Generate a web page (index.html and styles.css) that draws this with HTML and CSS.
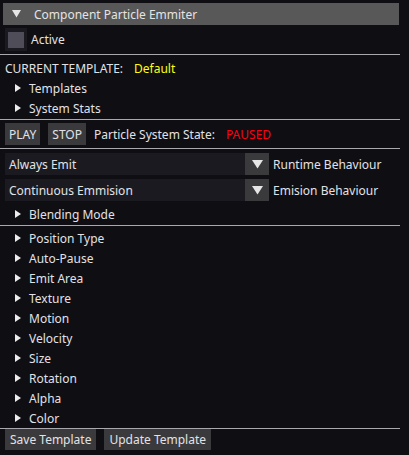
FILE: index.html
```html
<!DOCTYPE html>
<html>
<head>
<meta charset="utf-8">
<link rel="stylesheet" href="styles.css">
</head>
<body>
<div class="panel">
  <div class="header">
    <svg class="tri-down" width="9" height="8" viewBox="0 0 9 8"><polygon points="0,0 9,0 4.5,7.5" fill="#e6e6e6"/></svg>
    <span>Component Particle Emmiter</span>
  </div>
  <div class="row check-row">
    <div class="check"><div class="check-inner"></div></div>
    <span class="label">Active</span>
  </div>
  <div class="sep sep-a"></div>
  <div class="row text-row first">
    <span>CURRENT TEMPLATE:</span><span class="yellow">Default</span>
  </div>
  <div class="tree">
    <div class="node"><svg class="tri" width="6" height="8" viewBox="0 0 6 8"><polygon points="0,0 6,4 0,8" fill="#ececec"/></svg><span>Templates</span></div>
    <div class="node"><svg class="tri" width="6" height="8" viewBox="0 0 6 8"><polygon points="0,0 6,4 0,8" fill="#ececec"/></svg><span>System Stats</span></div>
  </div>
  <div class="sep sep-b"></div>
  <div class="row btn-row">
    <button class="btn play">PLAY</button>
    <button class="btn stop">STOP</button>
    <span class="state">Particle System State:</span>
    <span class="red">PAUSED</span>
  </div>
  <div class="sep sep-c"></div>
  <div class="combo-row">
    <div class="combo"><span>Always Emit</span></div>
    <div class="arrow"><svg width="11" height="9" viewBox="0 0 11 9"><polygon points="0,0 11,0 5.5,8.5" fill="#e6e6e6"/></svg></div>
    <span class="combo-label">Runtime Behaviour</span>
  </div>
  <div class="combo-row second">
    <div class="combo"><span>Continuous Emmision</span></div>
    <div class="arrow"><svg width="11" height="9" viewBox="0 0 11 9"><polygon points="0,0 11,0 5.5,8.5" fill="#e6e6e6"/></svg></div>
    <span class="combo-label">Emision Behaviour</span>
  </div>
  <div class="tree single">
    <div class="node"><svg class="tri" width="6" height="8" viewBox="0 0 6 8"><polygon points="0,0 6,4 0,8" fill="#ececec"/></svg><span>Blending Mode</span></div>
  </div>
  <div class="sep sep-d"></div>
  <div class="tree list">
    <div class="node"><svg class="tri" width="6" height="8" viewBox="0 0 6 8"><polygon points="0,0 6,4 0,8" fill="#ececec"/></svg><span>Position Type</span></div>
    <div class="node"><svg class="tri" width="6" height="8" viewBox="0 0 6 8"><polygon points="0,0 6,4 0,8" fill="#ececec"/></svg><span>Auto-Pause</span></div>
    <div class="node"><svg class="tri" width="6" height="8" viewBox="0 0 6 8"><polygon points="0,0 6,4 0,8" fill="#ececec"/></svg><span>Emit Area</span></div>
    <div class="node"><svg class="tri" width="6" height="8" viewBox="0 0 6 8"><polygon points="0,0 6,4 0,8" fill="#ececec"/></svg><span>Texture</span></div>
    <div class="node"><svg class="tri" width="6" height="8" viewBox="0 0 6 8"><polygon points="0,0 6,4 0,8" fill="#ececec"/></svg><span>Motion</span></div>
    <div class="node"><svg class="tri" width="6" height="8" viewBox="0 0 6 8"><polygon points="0,0 6,4 0,8" fill="#ececec"/></svg><span>Velocity</span></div>
    <div class="node"><svg class="tri" width="6" height="8" viewBox="0 0 6 8"><polygon points="0,0 6,4 0,8" fill="#ececec"/></svg><span>Size</span></div>
    <div class="node"><svg class="tri" width="6" height="8" viewBox="0 0 6 8"><polygon points="0,0 6,4 0,8" fill="#ececec"/></svg><span>Rotation</span></div>
    <div class="node"><svg class="tri" width="6" height="8" viewBox="0 0 6 8"><polygon points="0,0 6,4 0,8" fill="#ececec"/></svg><span>Alpha</span></div>
    <div class="node"><svg class="tri" width="6" height="8" viewBox="0 0 6 8"><polygon points="0,0 6,4 0,8" fill="#ececec"/></svg><span>Color</span></div>
  </div>
  <div class="sep sep-e"></div>
  <div class="row bottom-row">
    <button class="btn save">Save Template</button>
    <button class="btn update">Update Template</button>
  </div>
</div>
</body>
</html>
```
FILE: styles.css
```css
html, body {
  margin: 0;
  padding: 0;
  background: #0f0e13;
}
body {
  width: 409px;
  height: 455px;
  overflow: hidden;
  font-family: "Noto Sans", "Open Sans", sans-serif;
  font-size: 12px;
  color: #e2e2e6;
}
.panel {
  display: flex;
  flex-direction: column;
  padding-top: 3px;
}
.header {
  margin-left: 3px;
  width: 396px;
  height: 22px;
  background: #585858;
  display: flex;
  align-items: center;
  color: #e4e4e4;
}
.tri-down {
  margin-left: 9px;
  margin-right: 13px;
}
.row {
  display: flex;
  align-items: center;
}
.check-row {
  margin-top: 3px;
  height: 23px;
  padding-left: 5px;
}
.check {
  width: 22px;
  height: 23px;
  background: #1b1a20;
  display: flex;
  align-items: center;
  justify-content: center;
}
.check-inner {
  width: 16px;
  height: 16px;
  background: #4f4e58;
}
.label {
  margin-left: 4px;
}
.sep {
  height: 1px;
  width: 400px;
  background: #a8a8ae;
}
.sep-a {
  margin-top: 3px;
}
.text-row {
  height: 20px;
  padding-left: 5px;
  margin-top: 3px;
}
.yellow {
  color: #ffff10;
  margin-left: 11px;
}
.tree {
  display: flex;
  flex-direction: column;
}
.node {
  height: 20px;
  display: flex;
  align-items: center;
  padding-left: 15px;
}
.tri {
  margin-right: 8px;
}
.sep-b {
  margin-top: 1px;
}
.btn-row {
  margin-top: 3px;
  height: 22px;
  padding-left: 5px;
}
.btn {
  font: inherit;
  color: #e2e2e6;
  background: #3a3a3c;
  border: none;
  padding: 0 4px;
  height: 22px;
  margin: 0 8px 0 0;
}
.state {
  margin-right: 11px;
}
.red {
  color: #ff0010;
}
.sep-c {
  margin-top: 3px;
}
.combo-row {
  margin-top: 4px;
  height: 22px;
  display: flex;
  align-items: center;
  padding-left: 5px;
}
.combo {
  width: 240px;
  height: 22px;
  background: #1b1a20;
  display: flex;
  align-items: center;
  padding-left: 4px;
  box-sizing: border-box;
}
.arrow {
  width: 24px;
  height: 22px;
  background: #3a3a3c;
  display: flex;
  align-items: center;
  justify-content: center;
}
.combo-label {
  margin-left: 4px;
}
.single {
  margin-top: 3px;
}
.sep-d {
  margin-top: 1px;
}
.list {
  margin-top: 2px;
}
.sep-e {
  margin-top: 0;
}
.bottom-row {
  margin-top: 0;
  height: 21px;
  padding-left: 5px;
}
.bottom-row .btn {
  height: 21px;
  padding: 0 5px;
}
```
